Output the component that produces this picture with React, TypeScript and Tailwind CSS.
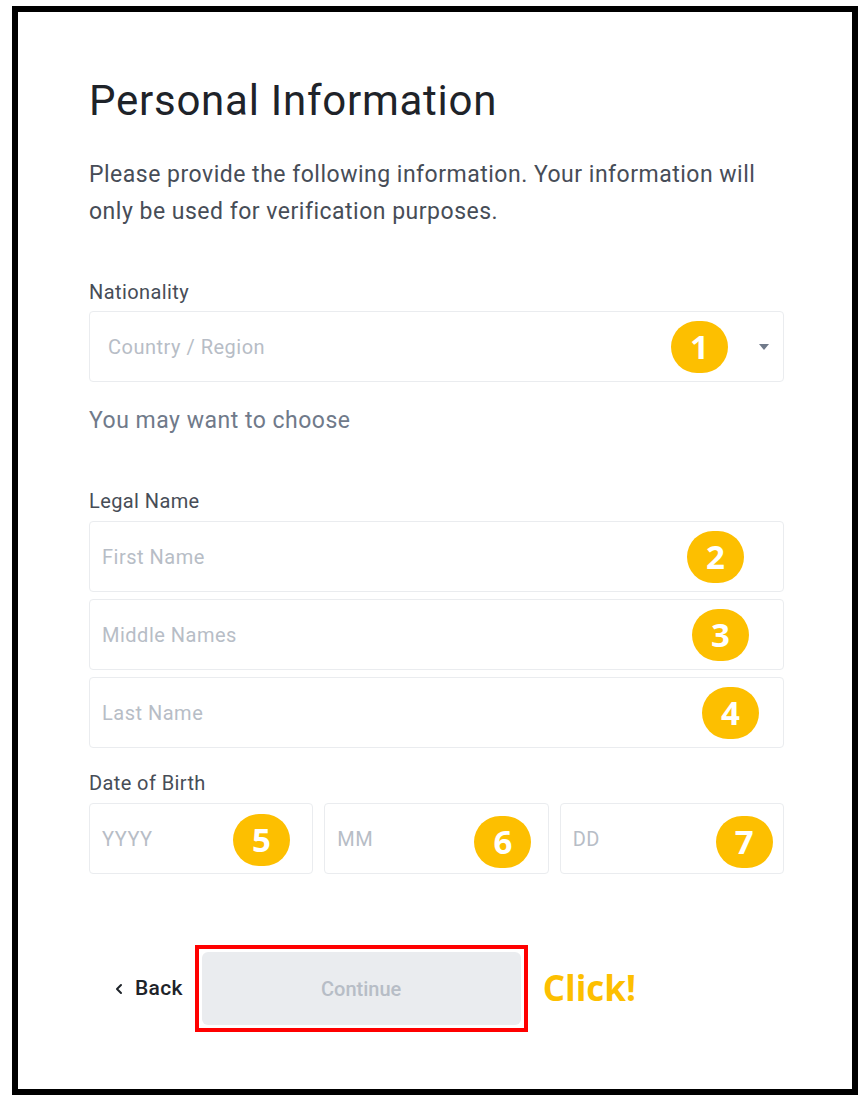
import { ChevronLeft } from 'lucide-react';

function Badge({ n, className }: { n: string; className: string }) {
    return (
        <div
            className={`absolute w-[57px] h-[52px] rounded-full bg-[#fdbf00] flex items-center justify-center text-white text-[33px] font-bold ${className}`}
            style={{ fontFamily: '"Open Sans", sans-serif' }}
        >
            {n}
        </div>
    );
}

function Field({ placeholder, children, className = '' }: { placeholder: string; children?: React.ReactNode; className?: string }) {
    return (
        <div className={`relative h-[71px] border border-[#eaecef] rounded-[4px] flex items-center pl-[12px] ${className}`}>
            <span className="text-[20px] tracking-[0.5px] text-[#b7bdc6]">{placeholder}</span>
            {children}
        </div>
    );
}

export default function App() {
    return (
        <div className="w-[868px] h-[1104px] bg-white pt-[6px] pl-[12px]" style={{ fontFamily: 'Roboto, "Liberation Sans", sans-serif' }}>
            <div className="w-[846px] h-[1089px] border-[6px] border-black pt-[64px] pl-[71px] pr-[60px]">
                {/* Header */}
                <h1 className="text-[42px] leading-[50px] tracking-[0.75px] text-[#1e2329]">Personal Information</h1>
                <p className="mt-[30px] text-[23px] leading-[37px] tracking-[0.5px] text-[#474d57]">
                    Please provide the following information. Your information will
                    <br />
                    only be used for verification purposes.
                </p>

                {/* Nationality */}
                <div className="mt-[50px] text-[20px] leading-[24px] tracking-[0.4px] text-[#474d57]">Nationality</div>
                <div className="mr-[8px]">
                    <Field placeholder="Country / Region" className="mt-[7px] pl-[18px]">
                        <Badge n="1" className="left-[581px] top-[9px]" />
                        <div className="absolute right-[14px] top-[32px] w-0 h-0 border-l-[5px] border-r-[5px] border-t-[6px] border-l-transparent border-r-transparent border-t-[#707a8a]" />
                    </Field>
                </div>
                <div className="mt-[25px] text-[23px] leading-[28px] tracking-[0.5px] text-[#707a8a]">You may want to choose</div>

                {/* Legal name */}
                <div className="mr-[8px]">
                    <div className="mt-[54px] text-[20px] leading-[24px] tracking-[0.4px] text-[#474d57]">Legal Name</div>
                    <div className="mt-[8px] flex flex-col gap-[7px]">
                        <Field placeholder="First Name">
                            <Badge n="2" className="left-[597px] top-[9px]" />
                        </Field>
                        <Field placeholder="Middle Names">
                            <Badge n="3" className="left-[602px] top-[9px]" />
                        </Field>
                        <Field placeholder="Last Name">
                            <Badge n="4" className="left-[612px] top-[9px]" />
                        </Field>
                    </div>

                    {/* Date of birth */}
                    <div className="mt-[23px] text-[20px] leading-[24px] tracking-[0.4px] text-[#474d57]">Date of Birth</div>
                    <div className="mt-[8px] grid grid-cols-3 gap-[11px]">
                        <Field placeholder="YYYY">
                            <Badge n="5" className="left-[143px] top-[10px]" />
                        </Field>
                        <Field placeholder="MM">
                            <Badge n="6" className="left-[149px] top-[12px]" />
                        </Field>
                        <Field placeholder="DD">
                            <Badge n="7" className="left-[155px] top-[12px]" />
                        </Field>
                    </div>
                </div>

                {/* Actions */}
                <div className="mt-[71px] flex items-center">
                    <button className="flex items-center gap-[8px] ml-[22px] text-[21px] font-medium tracking-[0.3px] text-[#1e2329]">
                        <ChevronLeft className="w-[16px] h-[16px]" strokeWidth={3} />
                        Back
                    </button>
                    <div className="ml-[12px] border-4 border-[#ff0000] p-[3px]">
                        <div className="w-[319px] h-[73px] rounded-[6px] bg-[#eaecef] flex items-center justify-center text-[20px] font-medium text-[#b7bdc6]">
                            Continue
                        </div>
                    </div>
                    <span className="ml-[15px] text-[35px] font-bold text-[#fdbf00]" style={{ fontFamily: '"Open Sans", sans-serif' }}>
                        Click!
                    </span>
                </div>
            </div>
        </div>
    );
}
